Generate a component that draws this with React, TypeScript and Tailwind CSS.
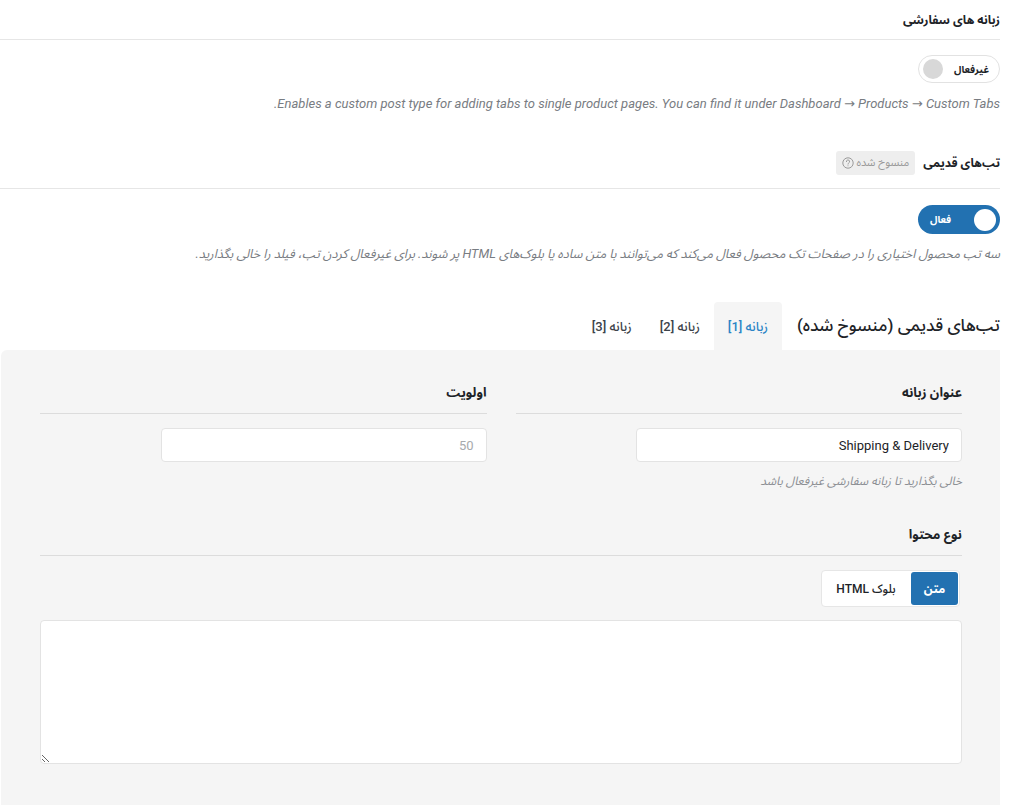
import * as React from 'react';

const FONT = 'font-[Roboto,"Noto_Sans_Arabic","DejaVu_Sans",sans-serif]';

const Toggle: React.FC<{ on: boolean; label: string }> = ({ on, label }) => {
  if (on) {
    return (
      <div className="flex h-[29px] w-[82px] items-center justify-between rounded-full bg-[#2271b1] pl-[12px] pr-[4px]">
        <span className="h-[22px] w-[22px] rounded-full bg-white" />
        <span className="text-[10px] font-bold text-white">{label}</span>
      </div>
    );
  }
  return (
    <div className="flex h-[28px] w-[82px] items-center justify-between rounded-full border border-[#e2e2e2] bg-white pl-[4px] pr-[10px]">
      <span className="text-[10px] font-bold text-[#1d2327]">{label}</span>
      <span className="h-[20px] w-[20px] rounded-full bg-[#d8d8d8]" />
    </div>
  );
};

const SectionHeading: React.FC<{ children: React.ReactNode; className?: string }> = ({ children, className }) => (
  <div className={`flex items-center gap-2 border-b border-[#e6e6e6] ${className ?? ''}`}>{children}</div>
);

export default function App() {
  const [tab, setTab] = React.useState(1);
  const [type, setType] = React.useState<'text' | 'html'>('text');

  return (
    <div dir="rtl" className={`min-h-[805px] bg-white pr-[24px] text-[#1d2327] ${FONT}`}>
      {/* Custom tabs */}
      <SectionHeading className="h-[40px]">
        <h3 className="text-[12px] font-bold">زبانه های سفارشی</h3>
      </SectionHeading>
      <div className="mt-[15px]">
        <Toggle on={false} label="غیرفعال" />
      </div>
      <p className="mt-[12px] text-[13px] leading-[18px] italic text-[#787c82]">
        Enables a custom post type for adding tabs to single product pages. You can find it under Dashboard → Products → Custom Tabs.
      </p>

      {/* Legacy tabs */}
      <SectionHeading className="mt-[25px] h-[51px]">
        <h3 className="text-[12px] font-bold">تب‌های قدیمی</h3>
        <span className="flex h-[24px] items-center gap-[3px] rounded-[3px] bg-[#eeeeee] px-[6px] text-[11px] text-[#9a9a9a]">
          منسوخ شده
          <svg width="12" height="12" viewBox="0 0 12 12" fill="none" stroke="#9a9a9a" strokeWidth="1">
            <circle cx="6" cy="6" r="5.2" />
            <path d="M4.4 4.6a1.6 1.6 0 1 1 2.3 1.4c-.5.3-.7.5-.7 1.1" strokeLinecap="round" />
            <circle cx="6" cy="8.8" r="0.5" fill="#9a9a9a" stroke="none" />
          </svg>
        </span>
      </SectionHeading>
      <div className="mt-[16px]">
        <Toggle on label="فعال" />
      </div>
      <p className="mt-[11px] text-[12.7px] leading-[18px] italic text-[#787c82]">
        سه تب محصول اختیاری را در صفحات تک محصول فعال می‌کند که می‌توانند با متن ساده یا بلوک‌های HTML پر شوند. برای غیرفعال کردن تب، فیلد را خالی بگذارید.
      </p>

      {/* Tab header */}
      <div className="mt-[39px] flex h-[48px] items-stretch">
        <h2 className="ml-[15px] flex items-center text-[17px] font-medium">تب‌های قدیمی (منسوخ شده)</h2>
        {[1, 2, 3].map((n) => (
          <button
            key={n}
            onClick={() => setTab(n)}
            className={`flex items-center rounded-t-[4px] px-[14px] pt-[1px] text-[13px] font-medium ${
              tab === n ? 'bg-[#f5f5f5] text-[#2a84c6]' : 'text-[#3c434a]'
            }`}
          >
            زبانه [{n}]
          </button>
        ))}
      </div>

      {/* Panel */}
      <div className="ml-[1px] min-h-[455px] rounded-tl-[6px] bg-[#f5f5f5] pb-[40px] pl-[39px] pr-[38px] pt-[33px]">
        <div className="grid grid-cols-2 items-start gap-x-[29px]">
          <div>
            <div className="border-b border-[#dcdcdc] pb-[10px] text-[13px] font-bold leading-[20px]">عنوان زبانه</div>
            <input
              defaultValue="Shipping & Delivery"
              className="mt-[14px] h-[34px] w-[326px] rounded-[4px] border border-[#e3e3e3] bg-white px-[12px] text-[13px] text-[#1d2327] outline-none"
            />
            <p className="mt-[10px] text-[12px] leading-[18px] italic text-[#8c8f94]">خالی بگذارید تا زبانه سفارشی غیرفعال باشد</p>
          </div>
          <div>
            <div className="border-b border-[#dcdcdc] pb-[10px] text-[13px] font-bold leading-[20px]">اولویت</div>
            <input
              placeholder="50"
              className="mt-[14px] h-[34px] w-[326px] rounded-[4px] border border-[#e3e3e3] bg-white px-[12px] text-[13px] outline-none placeholder:text-[#a7aaad]"
            />
          </div>
        </div>

        <div className="mt-[35px] border-b border-[#dcdcdc] pb-[10px] text-[13px] font-bold leading-[20px]">نوع محتوا</div>
        <div className="mt-[14px] flex">
          <div className="mr-[2px] flex h-[37px] items-center gap-[2px] rounded-[4px] border border-[#e6e6e6] bg-white p-[1px]">
            <button
              onClick={() => setType('text')}
              className={`h-[33px] w-[47px] rounded-[3px] text-[12px] font-bold ${type === 'text' ? 'bg-[#2271b1] text-white' : 'text-[#1d2327]'}`}
            >
              متن
            </button>
            <button
              onClick={() => setType('html')}
              className={`h-[33px] w-[86px] rounded-[3px] text-[12px] font-medium ${type === 'html' ? 'bg-[#2271b1] text-white' : 'text-[#1d2327]'}`}
            >
              بلوک HTML
            </button>
          </div>
        </div>
        <textarea className="mt-[13px] block h-[144px] w-full rounded-[4px] border border-[#e3e3e3] bg-white p-[10px] text-[13px] outline-none" />
      </div>
    </div>
  );
}
